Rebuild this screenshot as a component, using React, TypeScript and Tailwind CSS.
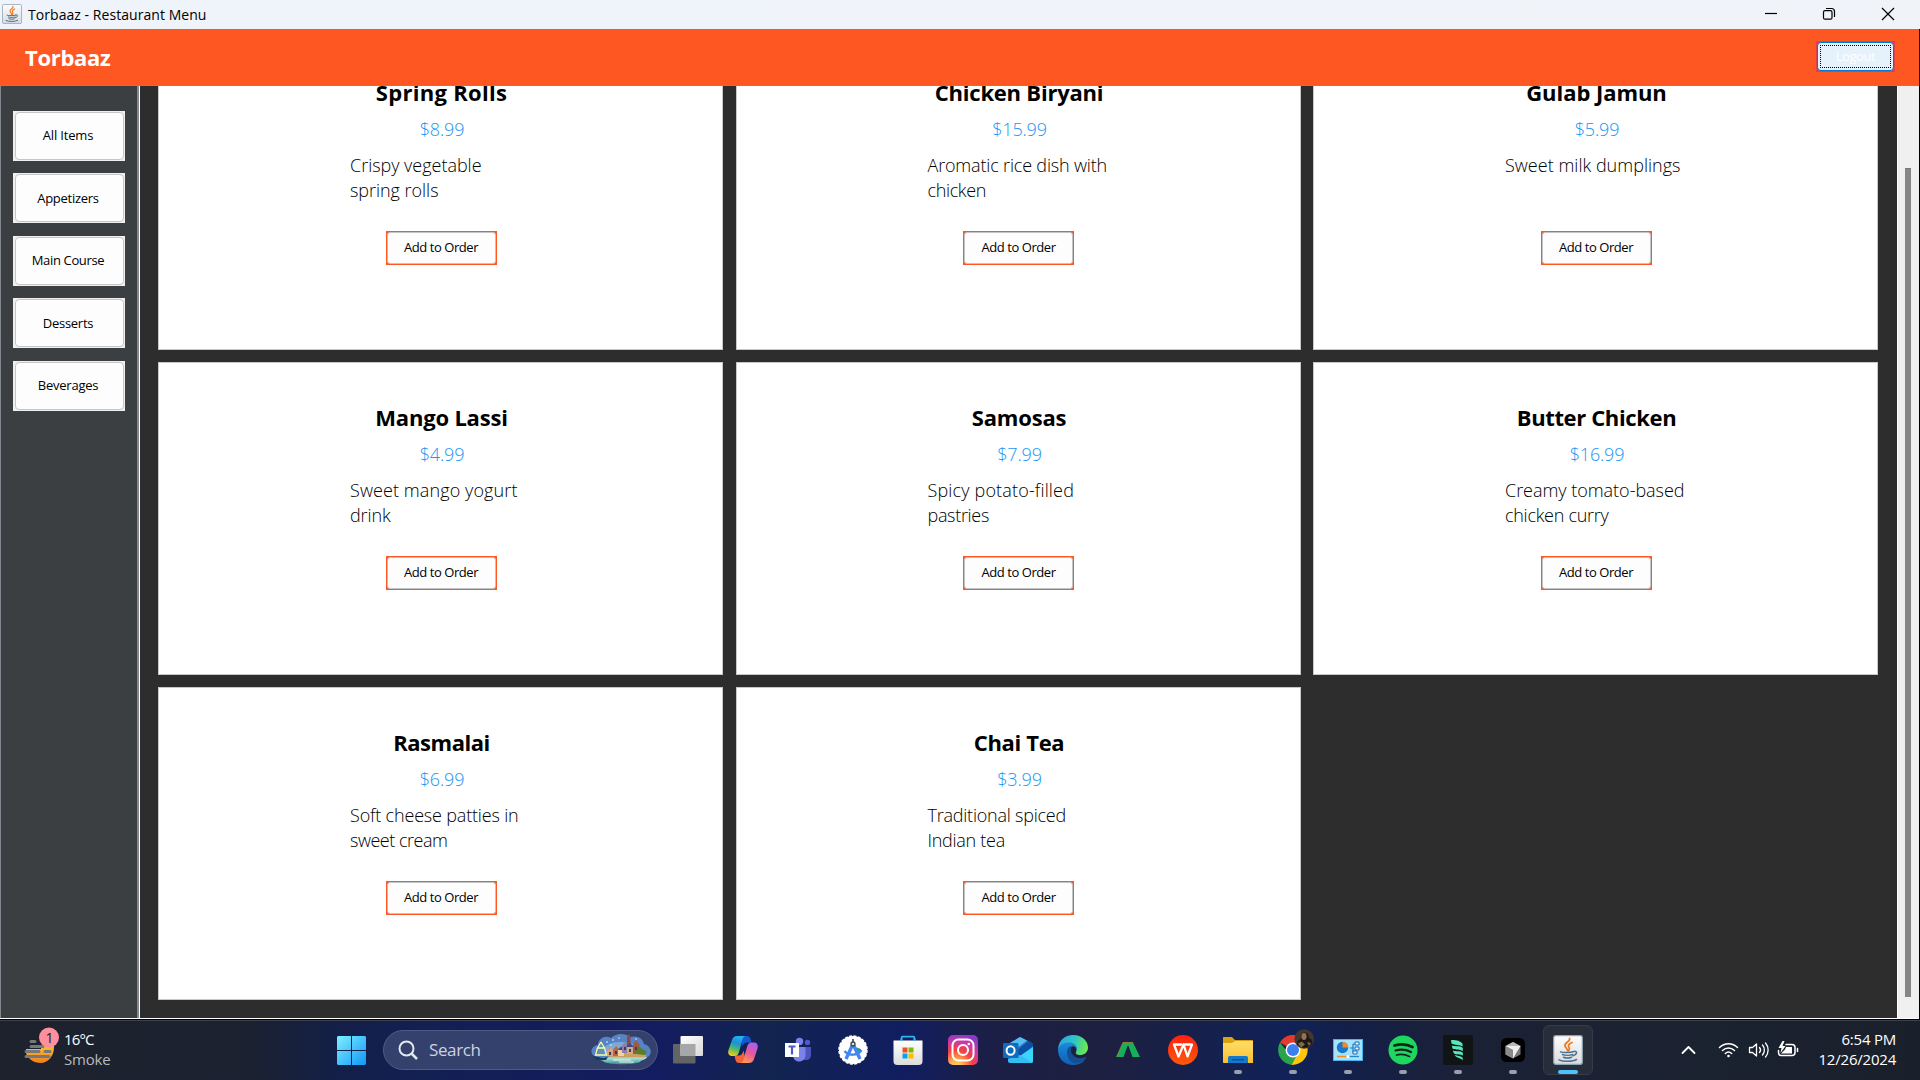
import { useLayoutEffect, useRef, useState, type ReactNode } from "react";

/* Text whose tracking is computed so that it spans a given width. */
function Fit({ text, width, className = "" }: { text: string; width: number; className?: string }) {
  const ref = useRef<HTMLSpanElement>(null);
  const [spacing, setSpacing] = useState(0);
  useLayoutEffect(() => {
    const el = ref.current;
    if (!el) return;
    const natural = el.getBoundingClientRect().width - spacing * text.length;
    setSpacing((width + 0.5 - natural) / text.length);
  }, [text, width]);
  return (
    <span ref={ref} className={"inline-block whitespace-pre " + className} style={{ letterSpacing: spacing + "px" }}>
      {text}
    </span>
  );
}

type Item = { name: string; nameW: number; price: string; lines: [string, number][] };

const items: Item[] = [
  { name: "Spring Rolls", nameW: 131, price: "$8.99", lines: [["Crispy vegetable", 131], ["spring rolls", 88]] },
  { name: "Chicken Biryani", nameW: 168, price: "$15.99", lines: [["Aromatic rice dish with", 179], ["chicken", 58]] },
  { name: "Gulab Jamun", nameW: 140, price: "$5.99", lines: [["Sweet milk dumplings", 175]] },
  { name: "Mango Lassi", nameW: 132, price: "$4.99", lines: [["Sweet mango yogurt", 167], ["drink", 40]] },
  { name: "Samosas", nameW: 94, price: "$7.99", lines: [["Spicy potato-filled", 146], ["pastries", 61]] },
  { name: "Butter Chicken", nameW: 159, price: "$16.99", lines: [["Creamy tomato-based", 179], ["chicken curry", 103]] },
  { name: "Rasmalai", nameW: 96, price: "$6.99", lines: [["Soft cheese patties in", 168], ["sweet cream", 97]] },
  { name: "Chai Tea", nameW: 90, price: "$3.99", lines: [["Traditional spiced", 138], ["Indian tea", 77]] },
];

const categories: [string, number][] = [
  ["All Items", 50],
  ["Appetizers", 61],
  ["Main Course", 72],
  ["Desserts", 50],
  ["Beverages", 60],
];

function JavaMark() {
  return (
    <svg viewBox="0 0 30 30" className="h-full w-full">
      <defs>
        <linearGradient id="jv" x1="0" y1="0" x2="0" y2="1">
          <stop offset="0" stopColor="#fdfdfd" />
          <stop offset="1" stopColor="#d9dbde" />
        </linearGradient>
      </defs>
      <rect x="0.7" y="0.7" width="28.6" height="28.6" rx="2" fill="url(#jv)" stroke="#8fa5b5" strokeWidth="1.2" />
      <path d="M16.500 3.500c1.500 3-5.500 4-4.500 7.500.4 1.500 2.300 2.500 2.500 4.500M19 7.500c-3 1.500-4.500 3-3 5 .8 1 .3 2.500-1 3.500" fill="none" stroke="#ee7a22" strokeWidth="1.800" strokeLinecap="round" />
      <path d="M7.500 16.800c2 1 10 1 13.500-.3M9.500 19.500c2.500 1 7.500 1 10 0M10.500 22.200c2 .8 6 .8 8 0M6 24.800c4 2.200 14 1.800 17.500-.3M21 16.500c3.500-1 3.500 3-1 4.200" fill="none" stroke="#4d7191" strokeWidth="1.500" strokeLinecap="round" />
    </svg>
  );
}

function Card({ item }: { item: Item }) {
  return (
    <article className="flex h-[313px] flex-col items-center border border-[#c8c8c8] bg-white pt-[39px]">
      <h2 className="ml-0.5 h-[30px] text-[22px] leading-[30px] font-bold">
        <Fit text={item.name} width={item.nameW} />
      </h2>
      <p className="mt-2.5 ml-[3px] h-6 text-[18px] leading-6 font-light text-[#2196f3]">
        <Fit text={item.price} width={item.price.length > 5 ? 54 : 44} />
      </p>
      <div className="mt-[12px] ml-0.5 h-[50px] w-[183px] text-[18px] leading-[25px] font-light">
        {item.lines.map(([t, w]) => (
          <div key={t} className="h-[25px]">
            <Fit text={t} width={w} />
          </div>
        ))}
      </div>
      <button className="mt-[28px] ml-px h-[34px] w-[111px] border border-[#ff5722] bg-[#ff5722]">
        <span className="flex h-full items-center justify-center rounded-[3px] border border-[#c4c4c4] bg-[#fdfdfd] pb-0.5 text-[13px] leading-none">
          <Fit text="Add to Order" width={73.500} />
        </span>
      </button>
    </article>
  );
}

function Slot({ children, state }: { children: ReactNode; state?: "open" | "active" }) {
  return (
    <div className="flex h-full w-[55px] flex-col items-center pt-1">
      <div
        className={
          "flex h-[50px] w-[50px] flex-col items-center rounded-md pt-2.5 " +
          (state === "active" ? "border border-[#353c48] bg-[#272e3a] pt-[9px]" : "")
        }
      >
        <div className="flex h-[30px] w-[30px] items-center justify-center">{children}</div>
        {state === "open" && <div className="mt-[5px] h-1 w-2 rounded-full bg-[#9a9fae]" />}
        {state === "active" && <div className="mt-[5px] h-1 w-5 shrink-0 rounded-full bg-[#4cc2ff]" />}
      </div>
    </div>
  );
}

function Weather() {
  return (
    <svg viewBox="0 0 36 38" className="h-[38px] w-9">
      <defs>
        <linearGradient id="sun" x1="0" y1="0" x2="0" y2="1">
          <stop offset="0" stopColor="#fbc02d" />
          <stop offset="1" stopColor="#f57c1f" />
        </linearGradient>
      </defs>
      <path d="M2 22h15v-3h13c.5 10-6 17-13.500 17C10 36 4 32 2 26z" fill="url(#sun)" />
      <path d="M7 14.500h4M7 19.500h12M2 24.500h13M21 24.500h5M2 29.500h23" stroke="#757778" strokeWidth="3" strokeLinecap="round" />
      <circle cx="25" cy="10.500" r="10" fill="#ff8f9c" />
      <text x="25.500" y="15.500" textAnchor="middle" fontSize="14" fontFamily="Open Sans, sans-serif" fill="#1c1c1c">1</text>
    </svg>
  );
}

function StartMark() {
  return (
    <svg viewBox="0 0 29 29" className="h-[29px] w-[29px]">
      <defs>
        <linearGradient id="win" x1="0" y1="0" x2="1" y2="1">
          <stop offset="0" stopColor="#7ef0ff" />
          <stop offset="1" stopColor="#1096f8" />
        </linearGradient>
      </defs>
      <path d="M1 0h13v14H0V1zM15 0h13l1 1v13H15zM0 15h14v14H1l-1-1zM15 15h14v13l-1 1H15z" fill="url(#win)" />
    </svg>
  );
}

function Harbour() {
  return (
    <svg viewBox="0 0 60 32" className="h-8 w-[60px]">
      <defs>
        <linearGradient id="water" x1="0" y1="0" x2="0" y2="1">
          <stop offset="0" stopColor="#c9ece0" />
          <stop offset="1" stopColor="#2f8f9d" />
        </linearGradient>
      </defs>
      <path d="M4 23C-2 19 0 12 7 11c0-7 8-10 13-7 5-5 14-5 19-1 7-2 13 1 14 7 7 2 9 9 4 13z" fill="#5583c4" />
      <path d="M8 20c4-9 12-12 22-12s18 4 24 13z" fill="#7fa8d6" />
      <path d="M4 23h52c-1 3-6 3-7 5-6 3-30 3-36 0-1-2-7-2-9-5z" fill="url(#water)" />
      <path d="M16 23.500h38c2.500-2 1-4-3-5l-18-2-13 5z" fill="#c9a05e" />
      <path d="M16 17l4-3 4 3v5h-8z" fill="#e1a370" /><path d="M22 16l3-4 4 4v6h-7z" fill="#b8654c" />
      <path d="M27 16h6v6h-6z" fill="#eed0a1" /><path d="M27 16l3-3.500 4 3.500z" fill="#354878" />
      <path d="M31 11l4-3 3 3v8h-7z" fill="#8d7fa8" /><path d="M36 12V3l2-3 1.500 3v9z" fill="#8c4b42" />
      <path d="M36 13h6v7h-6z" fill="#cfa98a" /><path d="M35 13l4-4 4 4z" fill="#3d4a82" />
      <path d="M42 11l3-5 3.500 5v9H42z" fill="#a5563f" />
      <path d="M45 20c-1-6 3-9 6-5 4 1 6 4 3 6z" fill="#5a7d2a" />
      <path d="M18 18h2v3h-2zM24 17h2v3h-2zM33 13h2v3h-2zM38 15h2v3h-2zM44 13h2v3h-2z" fill="#3a3c5e" />
      <path d="M10 8l-4 8h2l-3 6h11l-3-6h2z" fill="#5d94b4" /><path d="M10 8l-3.500 6h7L10 8M6.500 14L4.500 21h11l-2-7" fill="none" stroke="#fff6b4" strokeWidth="1.300" />
      <path d="M1 21c3 2 11 3 16 2l-2 3H5z" fill="#173d5c" />
      <path d="M22 26h18M28 28h15" stroke="#f2f7df" strokeWidth="1" />
      <g fill="#fff"><circle cx="16" cy="8" r=".8" /><circle cx="22" cy="6" r=".8" /><circle cx="28" cy="4" r=".7" /><circle cx="45" cy="5" r=".7" /><circle cx="20" cy="11" r=".7" /></g>
    </svg>
  );
}

const full = "h-[30px] w-[30px] overflow-visible";

function TaskView() {
  return (
    <svg viewBox="0 0 30 30" className={full}>
      <defs><linearGradient id="tv" x1="0" y1="0" x2="1" y2="1"><stop offset="0" stopColor="#fff" /><stop offset="1" stopColor="#d8d8d8" /></linearGradient></defs>
      <rect x="0" y="9" width="22.500" height="19.500" rx="1" fill="#636465" />
      <rect x="7.500" y="1" width="22.500" height="20" rx="1" fill="url(#tv)" />
      <path d="M7.500 9h15v12h-15z" fill="#a6a7a8" />
    </svg>
  );
}
function Copilot() {
  return (
    <svg viewBox="0 0 30 30" className={full}>
      <defs>
        <linearGradient id="c1" x1=".6" y1="0" x2=".3" y2="1"><stop offset="0" stopColor="#27b3f0" /><stop offset=".35" stopColor="#1b8fd8" /><stop offset=".65" stopColor="#4cb96e" /><stop offset="1" stopColor="#f0d010" /></linearGradient>
        <linearGradient id="c2" x1=".7" y1="0" x2=".3" y2="1"><stop offset="0" stopColor="#a560f0" /><stop offset=".5" stopColor="#e8579b" /><stop offset="1" stopColor="#ff9a50" /></linearGradient>
      </defs>
      <path d="M15 1h4c2 0 3 1 3.500 3l1 3.500h-4c-3 0-4 1-5 4L13 5z" fill="#1457d0" />
      <path d="M15 28h-4c-2 0-3-1-3.500-3l-1-4.500h4c3 0 4-2 5-5L17 22z" fill="#f4623a" />
      <path d="M9 1h9c-2 0-3 1.500-3.500 3.500L11 17c-.7 2.500-2 4-4.500 4H4c-3 0-4.500-2.500-3.500-6L4 5c.8-2.700 2.500-4 5-4z" fill="url(#c1)" />
      <path d="M21 28h-9c2 0 3-1.500 3.500-3.500L19 12c.7-2.500 2-4.500 4.500-4.500H26c3 0 4.500 2.500 3.500 6L26 24c-.8 2.700-2.500 4-5 4z" fill="url(#c2)" />
    </svg>
  );
}
function Teams() {
  return (
    <svg viewBox="0 0 30 30" className={full}>
      <circle cx="24.500" cy="7.500" r="2.700" fill="#5059c9" /><path d="M20 12h8v8c0 3-2 5-5 5h-3z" fill="#4b53bc" />
      <circle cx="16.500" cy="6.500" r="3.700" fill="#7b83eb" /><path d="M10 12h12.500v8c0 4-3 6.500-6.500 6.500S10 24 10 20z" fill="#7b83eb" />
      <rect x="2" y="8" width="14" height="14" fill="#fff" /><path d="M5.500 11.500h7M9 11.500v8" stroke="#5059c9" strokeWidth="2.200" />
    </svg>
  );
}
function AndroidStudio() {
  return (
    <svg viewBox="0 0 30 30" className={full}>
      <circle cx="15" cy="15" r="14" fill="#fff" stroke="#fff" strokeWidth="1.500" strokeDasharray="3 1.400" />
      <path d="M17 12l6 2-1 4-4 2z" fill="#2e9e5b" />
      <path d="M14.500 10L8 24M15.500 10L22 24" stroke="#4285f4" strokeWidth="3.400" /><path d="M6.500 16c4 5 13 5 17-1" fill="none" stroke="#4285f4" strokeWidth="2.500" />
      <path d="M15 4v5" stroke="#333" strokeWidth="1.500" /><circle cx="15" cy="9" r="2" fill="#ddd" stroke="#37474f" strokeWidth="1.300" />
    </svg>
  );
}
function Store() {
  return (
    <svg viewBox="0 0 30 30" className={full}>
      <defs><linearGradient id="st" x1="0" y1="0" x2="0" y2="1"><stop offset="0" stopColor="#fff" /><stop offset="1" stopColor="#dcdcdc" /></linearGradient></defs>
      <path d="M8.500 8V3c0-1 .5-1.300 1.300-1.300h10.400c.8 0 1.300.3 1.300 1.300v5" fill="none" stroke="#2cb5ea" strokeWidth="1.800" />
      <path d="M.5 5.500h29V26c0 2.500-1 4-4 4h-21c-3 0-4-1.500-4-4z" fill="url(#st)" />
      <path d="M8.500 6V3.500M21.500 6V3.500" stroke="#2cb5ea" strokeWidth="1.800" />
      <path d="M9.500 12.500h5v5h-5z" fill="#f25022" /><path d="M15.500 12.500h5v5h-5z" fill="#7fba00" /><path d="M9.500 18.500h5v5h-5z" fill="#00a4ef" /><path d="M15.500 18.500h5v5h-5z" fill="#ffb900" />
    </svg>
  );
}
function Instagram() {
  return (
    <svg viewBox="0 0 30 30" className={full}>
      <defs>
        <radialGradient id="ig" cx=".28" cy="1.050" r="1.100"><stop offset="0" stopColor="#ffdd55" /><stop offset=".2" stopColor="#ffb050" /><stop offset=".5" stopColor="#f5413e" /><stop offset=".75" stopColor="#cc39a4" /><stop offset="1" stopColor="#8a3ac8" /></radialGradient>
      </defs>
      <rect width="30" height="30" rx="5" fill="url(#ig)" />
      <rect x="4.500" y="4.500" width="21" height="21" rx="6" fill="none" stroke="#fff" strokeWidth="2" />
      <circle cx="15" cy="15" r="5" fill="none" stroke="#fff" strokeWidth="2" /><circle cx="20.800" cy="9" r="1.300" fill="#fff" />
    </svg>
  );
}
function Outlook() {
  return (
    <svg viewBox="0 0 30 30" className={full}>
      <path d="M5 10L17 2l11 5.500c1.500.7 2 1.500 2 3V26c0 1.500-1 2-2 2H8c-2 0-3-1-3-2z" fill="#1b74c4" />
      <path d="M5 9l12-7 7 3.500L13 14z" fill="#58bdf0" /><path d="M13 16L26 6l3 2c1 .7 1 1.500 1 3L17 21z" fill="#0b4ea2" />
      <path d="M30 12v14c0 1.500-1 2-2 2H8l9-7z" fill="#3bd5fb" /><path d="M5 24l12-4 12 7.500c-.3.300-.5.500-1 .5H8c-2 0-3-1-3-2z" fill="#35bdf0" />
      <rect x="0" y="8" width="15.500" height="15" rx="1" fill="#0f6cbd" /><ellipse cx="7.600" cy="15.500" rx="4" ry="4.300" fill="none" stroke="#fff" strokeWidth="2" />
    </svg>
  );
}
function Edge() {
  return (
    <svg viewBox="0 0 30 30" className={full}>
      <defs>
        <linearGradient id="e1" x1="0" y1=".3" x2="1" y2=".5"><stop offset="0" stopColor="#2aa6e0" /><stop offset=".5" stopColor="#2fc3c8" /><stop offset="1" stopColor="#6bea4c" /></linearGradient>
        <linearGradient id="e2" x1="0" y1="0" x2="0" y2="1"><stop offset="0" stopColor="#1b8bd8" /><stop offset="1" stopColor="#0f5db8" /></linearGradient>
      </defs>
      <path d="M0 14C1 5 7 0 15 0c9 0 15 6 15 12.500 0 5-4 7.500-8 7.500-3 0-5-1-4-3 2-4-1-7-5-7-6 0-11 1-13 4z" fill="url(#e1)" />
      <path d="M0 14C2 9 7 7 12 7.500c4 .3 7 3 7 6.500-1-2-3-3-5-2.500-5 1.500-5 9-1 13 3 3 8 4 14 .5C24 28.500 20 30 15 30 6 30-.5 23 0 14z" fill="url(#e2)" />
      <path d="M9 17c0-4 2.500-6 5-5.500-2 3-1 9 4.500 11 3.500 1.200 7 .5 9-.5.8-.3 1 .3.700.8C26 26.500 22 28.500 18 28.500 12 28 9 22.500 9 17z" fill="#164f91" />
    </svg>
  );
}
function GreenPeak() {
  return (
    <svg viewBox="0 0 30 30" className={full}>
      <path d="M3.500 22L10 7.500h10L27 22h-7.500L15.500 11h-1L10.500 22z" fill="#16b05a" />
      <path d="M3.500 22L10 7.500h10" fill="none" stroke="#a08a35" strokeWidth=".8" />
    </svg>
  );
}
function Wps() {
  return (
    <svg viewBox="0 0 30 30" className={full}>
      <defs><linearGradient id="wp" x1="0" y1="0" x2="0" y2="1"><stop offset="0" stopColor="#ff1f10" /><stop offset="1" stopColor="#ff5a0a" /></linearGradient></defs>
      <circle cx="15" cy="15" r="15" fill="url(#wp)" />
      <path d="M13 9.500H6l4.500 12 5-12 4 12L24 9.500h-8.500" fill="none" stroke="#fff" strokeWidth="2.300" strokeLinejoin="round" strokeLinecap="round" />
    </svg>
  );
}
function Folder() {
  return (
    <svg viewBox="0 0 30 30" className={full}>
      <defs><linearGradient id="fo" x1="0" y1="0" x2="0" y2="1"><stop offset="0" stopColor="#ffdd6b" /><stop offset="1" stopColor="#fbc02e" /></linearGradient></defs>
      <path d="M0 3c0-.7.300-1 1-1h8l3 3h17c.7 0 1 .3 1 1v8H0z" fill="#dca10e" />
      <path d="M0 8h9l3-2h18v22H1c-.7 0-1-.3-1-1z" fill="url(#fo)" />
      <path d="M5 28v-5c0-1.500 1-2 2-2h16c1.500 0 2 .7 2 2v5z" fill="#1478cc" /><path d="M9 24.700h12" stroke="#0b4f91" strokeWidth="1.300" />
    </svg>
  );
}
function Chrome() {
  return (
    <svg viewBox="0 0 30 30" className={full}>
      <path d="M15 15L2 7.500C5 2.500 9.500 0 15 0s10.500 3 13 7.500z" fill="#e33b2e" /><path d="M15 15H8L2 7.500C-2 15 0 27 13.500 30l5-8z" fill="#2ba24c" />
      <path d="M15 15V8h13c4.500 8.500 0 21.500-14.500 22l6-11z" fill="#fdc60a" />
      <circle cx="15" cy="15" r="7.500" fill="#fff" /><circle cx="15" cy="15" r="6" fill="#3b7ff0" />
      <circle cx="26.200" cy="4" r="9.800" fill="#43382f" />
      <path d="M19 9c0-3 2-5 4-5-2-8 8-9 8-1 3 1 4 4 3 6-4 5-11 5-15 0z" fill="#1d1813" /><ellipse cx="26" cy="1.500" rx="2.600" ry="3.400" fill="#94705c" /><path d="M20 8.500l4-2 3 3-4 3zM29 7l4 1-2 3z" fill="#7d6850" />
    </svg>
  );
}
function ControlPanel() {
  return (
    <svg viewBox="0 0 30 30" className={full}>
      <rect x=".5" y="4.500" width="29" height="21" fill="#a6e3fb" stroke="#45b4ea" />
      <circle cx="9.500" cy="12.500" r="5.700" fill="#1a78c8" /><path d="M9.500 12.500V6.800a5.700 5.700 0 0 1 5.700 5.700z" fill="#f58a1f" />
      <path d="M17 13h3M20 9v8h2M20 9h2" fill="none" stroke="#1a78c8" strokeWidth="1.200" />
      <path d="M22 7h4v3h-4zM22 12h4v3h-4zM20 16h4v3h-4z" fill="#e8f8ff" stroke="#1a6bb5" strokeWidth="1" />
      <path d="M4 21.500h11" stroke="#f58a1f" strokeWidth="1.500" /><path d="M15 21.500h11" stroke="#2b83c6" strokeWidth="1.300" /><circle cx="15" cy="21.500" r="1.600" fill="#fff" />
    </svg>
  );
}
function Spotify() {
  return (
    <svg viewBox="0 0 30 30" className={full}>
      <circle cx="15" cy="15" r="14.500" fill="#1ed760" />
      <g fill="none" stroke="#10251b" strokeLinecap="round"><path d="M6.500 10.500c6-1.800 13-1.200 18 1.500" strokeWidth="2.700" /><path d="M7.500 15.500c5-1.400 11-.8 15.500 1.500" strokeWidth="2.200" /><path d="M8.500 20c4.500-1.200 9-.5 13 1.500" strokeWidth="1.800" /></g>
    </svg>
  );
}
function Feather() {
  return (
    <svg viewBox="0 0 30 30" className={full}>
      <rect width="30" height="30" rx="2" fill="#101415" />
      <path d="M8 5c4-.5 9 .5 11.500 3.500v3.300C17 9.500 12 10.500 8.500 8.500zM8.800 10.500c4 1.500 8-.5 11 2.500v3.300c-3-2.600-7-.8-10.300-2.800zM9.800 15.500c4 1.500 7-.5 10 2.300v3c-3-2.300-6-.3-9-2.500zM11.500 20c3 1 6 .5 8 2.500l.5 3c-2-3-6-1.800-8.500-5.500z" fill="#58e6bd" />
    </svg>
  );
}
function Cube() {
  return (
    <svg viewBox="0 0 30 30" className={full}>
      <rect x="3" y="3" width="24" height="24" rx="5.500" fill="#000" />
      <path d="M15 7l7.500 4v8.500L15 23.500l-7.500-4V11z" fill="#777" /><path d="M15 7l7.500 4L15 15l-7.500-4z" fill="#b9b9b9" /><path d="M7.500 11h15L15 23.500V15z" fill="#efefef" /><path d="M7.500 11l7.500 4v8.500l-7.500-4z" fill="#8a8a8a" />
    </svg>
  );
}

export default function App() {
  return (
    <div className="flex h-[1080px] w-[1920px] flex-col overflow-hidden bg-[#2d2d2d] font-['Open_Sans','Noto_Sans',sans-serif] text-black">
      <header className="flex h-[29px] shrink-0 items-center bg-gradient-to-r from-[#eff3fb] to-[#f0f3f8] pl-0.5 text-[14px]">
        <div className="mt-[-2px] h-5 w-5"><JavaMark /></div>
        <div className="ml-1.5"><Fit text="Torbaaz - Restaurant Menu" width={178} /></div>
        <svg viewBox="0 0 140 14" className="mt-[-1px] mr-6 ml-auto h-3.5 w-[140px] text-black" fill="none" stroke="currentColor" strokeWidth="1.200">
          <path d="M9 6.500h12" />
          <rect x="67.500" y="3.700" width="8.500" height="8.500" rx="1.500" />
          <path d="M70 1.500h5.500q3 0 3 3V10" />
          <path d="M126 1l12 12M138 1l-12 12" />
        </svg>
      </header>

      <div className="flex h-[991px] shrink-0 border-r border-black">
        <div className="flex w-[1919px] flex-col">
          <div className="flex h-[57px] shrink-0 items-center border-b border-[#828790] bg-[#ff5722] pr-6 pl-[25px] text-[22px] font-bold text-white">
            <Fit text="Torbaaz" width={85} />
            <button className="mt-[-1px] ml-auto h-[31px] w-[79px] bg-[#dc4150] p-px font-normal">
              <span className="block h-full rounded-[4px] border border-[#0078d7] bg-[#e5f1fb] p-0.5">
                <span className="flex h-full items-center justify-center border border-dotted border-black text-[13px] leading-none text-white">
                  <Fit text="Logout" width={39} />
                </span>
              </span>
            </button>
          </div>

          <div className="flex h-[932px] shrink-0">
            <nav className="flex w-[140px] shrink-0 flex-col gap-[12.5px] border-r border-l border-r-white border-l-[#828790] bg-[#3c3f41] pt-[24.500px] pl-3 shadow-[inset_-2px_0_0_#828790]">
              {categories.map(([c, w]) => (
                <button key={c} className="h-[50px] w-28 shrink-0 bg-[#f0f0f0] px-px py-px pl-0.5">
                  <span className="flex h-full items-center justify-center rounded-[4px] border border-[#c6c6c6] bg-[#fdfdfd] pr-[3px] text-[13px] leading-none">
                    <Fit text={c} width={w} />
                  </span>
                </button>
              ))}
            </nav>
            <main className="h-full w-[1757px] shrink-0 overflow-hidden bg-[#2d2d2d]">
              <div className="mt-[-49px] grid w-[1738px] grid-cols-[565px_565px_565px] gap-x-[12.5px] gap-y-3 pl-[18px]">
                {items.map((it) => (
                  <Card key={it.name} item={it} />
                ))}
              </div>
            </main>
            <aside className="flex flex-1 justify-center border-l border-white bg-[#f0f0f0] pt-[82px]">
              <div className="mr-px h-[829px] w-1.5 border-t border-[#777] bg-[#868686]" />
            </aside>
          </div>
          <div className="h-px bg-white" />
          <div className="h-px bg-black" />
        </div>
      </div>

      <footer className="flex h-[60px] shrink-0 border-t border-[#3c414b] bg-[linear-gradient(90deg,#1d222d_0%,#1b2130_13%,#141f45_17%,#12204f_20%,#131c60_34%,#122450_40%,#101d60_47%,#1b1f48_51%,#1e2040_57%,#17204a_62%,#102258_67%,#131f4a_70%,#1b2136_76%,#1b2231_85%,#1a202b_100%)] text-white">
        <div className="flex w-[324px] pt-1.5 pl-6">
          <Weather />
          <div className="ml-1 pt-0.5 text-[15px] leading-5">
            <div><Fit text="16°C" width={29} /></div>
            <div className="text-[#b7babf]"><Fit text="Smoke" width={46} /></div>
          </div>
        </div>
        <div className="flex w-[55px] justify-center pt-[15px]"><StartMark /></div>
        <div className="mt-[9px] ml-1 flex h-10 w-[275px] items-center rounded-full border border-[#4f5b86] bg-[#34416c]">
          <svg viewBox="0 0 20 20" className="ml-3.5 h-5 w-5" fill="none" stroke="#e4e7ef" strokeWidth="2">
            <circle cx="8.500" cy="8.500" r="7" /><path d="M13.500 13.500L19 19" strokeWidth="2.500" />
          </svg>
          <div className="ml-[11px] text-[17px] text-[#ccd2e1]"><Fit text="Search" width={51} /></div>
          <div className="mr-1.5 ml-auto"><Harbour /></div>
        </div>
        <div className="ml-[2px] flex">
          <Slot><TaskView /></Slot>
          <Slot><Copilot /></Slot>
          <Slot><Teams /></Slot>
          <Slot><AndroidStudio /></Slot>
          <Slot><Store /></Slot>
          <Slot><Instagram /></Slot>
          <Slot><Outlook /></Slot>
          <Slot><Edge /></Slot>
          <Slot><GreenPeak /></Slot>
          <Slot><Wps /></Slot>
          <Slot state="open"><Folder /></Slot>
          <Slot state="open"><Chrome /></Slot>
          <Slot state="open"><ControlPanel /></Slot>
          <Slot state="open"><Spotify /></Slot>
          <Slot state="open"><Feather /></Slot>
          <Slot state="open"><Cube /></Slot>
          <Slot state="active"><JavaMark /></Slot>
        </div>
        <div className="ml-auto flex pr-6">
          <svg viewBox="0 0 120 24" className="mt-4 mr-[19px] h-6 w-[120px]" fill="none" stroke="#fff" strokeWidth="1.500" strokeLinecap="round" strokeLinejoin="round">
            <path d="M2.500 16l6-6 6 6" strokeWidth="1.800" />
            <path d="M39.500 10.500c5-5 13-5 18 0M42.500 13.500c3.500-3.300 8.500-3.300 12 0M45.300 16.500c2-1.800 4.400-1.800 6.400 0" />
            <circle cx="48.500" cy="19" r="1.300" fill="#fff" stroke="none" />
            <path d="M69.500 10.500h3l4-3.500v12l-4-3.500h-3z" strokeWidth="1.300" />
            <path d="M79.500 10.500c1.300 1.500 1.300 3.500 0 5M82.500 8c2.500 2.800 2.500 7.200 0 10M85.500 6c3.500 4 3.500 10 0 14" strokeWidth="1.300" />
            <path d="M106 7.500h6c2 0 3 1 3 3v5c0 2-1 3-3 3h-11c-1.500 0-2.500-1-2.500-3v-2M117.500 11.500v3" />
            <path d="M106 10h6v6.500h-11l4-4z" fill="#fff" stroke="none" />
            <path d="M102.500 4l-4 7h3l-1 5 5-7h-3l2-5z" fill="#fff" stroke="none" />
          </svg>
          <div className="pt-2 text-right text-[15px] leading-5">
            <div><Fit text="6:54 PM" width={54} /></div>
            <div><Fit text="12/26/2024" width={77} /></div>
          </div>
        </div>
      </footer>
    </div>
  );
}
